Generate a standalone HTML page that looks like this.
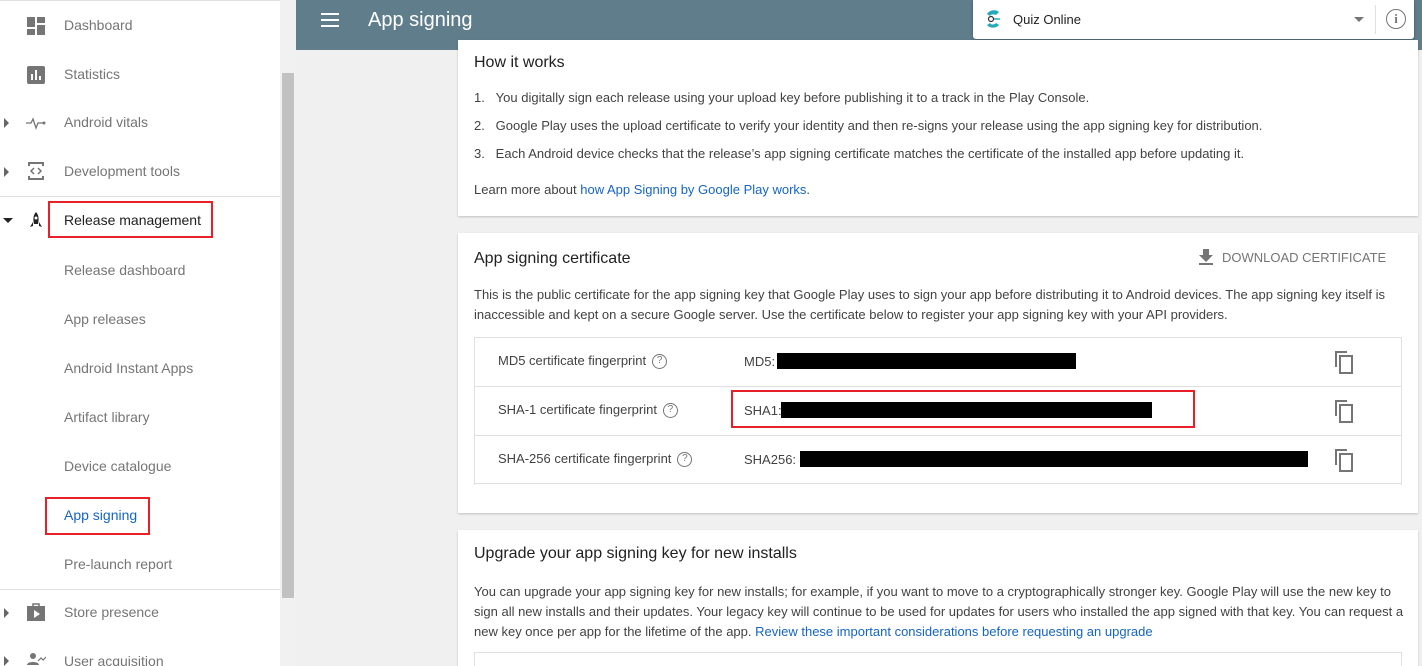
<!DOCTYPE html>
<html><head><meta charset="utf-8"><style>
*{box-sizing:border-box;margin:0;padding:0}
html,body{width:1422px;height:666px;overflow:hidden}
body{font-family:"Liberation Sans",Arial,sans-serif;background:#f0f0f0;position:relative;color:#212121}
.side{position:absolute;left:0;top:0;width:280px;height:666px;background:#fff;border-top:1px solid #e0e0e0}
.item{position:absolute;left:64px;font-size:14px;color:#757575;line-height:20px}
.ic{position:absolute;left:26px;width:20px;height:20px}
.arr{position:absolute;left:4px;width:0;height:0;border-top:5px solid transparent;border-bottom:5px solid transparent;border-left:5px solid #666}
.sep{position:absolute;left:0;width:280px;height:1px;background:#e0e0e0}
.redbox{position:absolute;border:2px solid #e8202a}
.sb{position:absolute;left:280px;top:0;width:16px;height:666px;background:#f1f1f1}
.thumb{position:absolute;left:282px;top:73px;width:12px;height:525px;background:#c1c1c1}
.hdr{position:absolute;left:296px;top:0;width:1126px;height:50px;background:#607d8b}
.card{position:absolute;left:458px;width:960px;background:#fff;box-shadow:0 1px 2px rgba(0,0,0,.2)}
.t{font-size:16px;color:#212121;position:absolute;left:16px}
.p{font-size:13px;color:#424242;position:absolute;left:16px;line-height:20px}
a{color:#1565c0;text-decoration:none}
.row{position:absolute;left:16px;width:928px;height:49px;border-top:1px solid #e0e0e0;font-size:13px;color:#424242}
.q{display:inline-block;width:15px;height:15px;border:1.5px solid #757575;border-radius:50%;font-size:10px;text-align:center;line-height:12px;color:#757575;margin-left:6px;vertical-align:middle}
.blk{position:absolute;height:16px;background:#000}
</style></head><body>
<div class="side">
<svg class="ic" style="top:15px" viewBox="0 0 20 20"><rect x="1" y="1" width="8" height="10" fill="#757575"/><rect x="11" y="1" width="8" height="6" fill="#757575"/><rect x="1" y="13" width="8" height="6" fill="#757575"/><rect x="11" y="9" width="8" height="10" fill="#757575"/></svg>
<div class="item" style="top:14px">Dashboard</div>
<svg class="ic" style="top:64px" viewBox="0 0 20 20"><rect x="1" y="1" width="18" height="18" rx="2" fill="#757575"/><rect x="5" y="9" width="2" height="6" fill="#fff"/><rect x="9" y="5" width="2" height="10" fill="#fff"/><rect x="13" y="11" width="2" height="4" fill="#fff"/></svg>
<div class="item" style="top:63px">Statistics</div>
<div class="arr" style="top:117px"></div>
<svg class="ic" style="top:112px" viewBox="0 0 20 20"><path d="M0 10h5l2-4 3 9 2-5h6" fill="none" stroke="#757575" stroke-width="1.3"/><circle cx="18" cy="10" r="1.5" fill="#757575"/></svg>
<div class="item" style="top:111px">Android vitals</div>
<div class="arr" style="top:166px"></div>
<svg class="ic" style="top:160px" viewBox="0 0 20 20"><path d="M3 5V2h14v3M3 15v3h14v-3" fill="none" stroke="#757575" stroke-width="2"/><path d="M8 7l-3 3 3 3M12 7l3 3-3 3" fill="none" stroke="#757575" stroke-width="1.5"/></svg>
<div class="item" style="top:160px">Development tools</div>
<div class="sep" style="top:195px"></div>
<div style="position:absolute;left:3px;top:217px;border-left:5px solid transparent;border-right:5px solid transparent;border-top:5px solid #222"></div>
<svg class="ic" style="top:210px" viewBox="0 0 20 20"><path d="M10 1c3 3 3 8 2 12H8C7 9 7 4 10 1z M7 11l-3 5 3-1z M13 11l3 5-3-1z" fill="#222"/><circle cx="10" cy="7" r="1.5" fill="#fff"/></svg>
<div class="item" style="top:209px;color:#212121">Release management</div>
<div class="redbox" style="left:48px;top:200px;width:165px;height:37px"></div>
<div class="item" style="top:259px">Release dashboard</div>
<div class="item" style="top:308px">App releases</div>
<div class="item" style="top:357px">Android Instant Apps</div>
<div class="item" style="top:406px">Artifact library</div>
<div class="item" style="top:455px">Device catalogue</div>
<div class="item" style="top:504px;color:#1565c0">App signing</div>
<div class="redbox" style="left:45px;top:496px;width:105px;height:38px"></div>
<div class="item" style="top:553px">Pre-launch report</div>
<div class="sep" style="top:588px"></div>
<div class="arr" style="top:607px"></div>
<svg class="ic" style="top:601px" viewBox="0 0 20 20"><path d="M7 4V2h6v2" fill="none" stroke="#757575" stroke-width="1.5"/><rect x="1" y="4" width="18" height="15" fill="#757575"/><path d="M8 8v8l6-4z" fill="#fff"/></svg>
<div class="item" style="top:601px">Store presence</div>
<div class="arr" style="top:655px"></div>
<svg class="ic" style="top:650px" viewBox="0 0 20 20"><circle cx="7" cy="5" r="3" fill="#757575"/><path d="M1 14c0-4 12-4 12 0z" fill="#757575"/><path d="M12 10l3-3 2 2 3-3" fill="none" stroke="#757575" stroke-width="1.2"/></svg>
<div class="item" style="top:650px">User acquisition</div>
</div>
<div class="sb"></div><div class="thumb"></div>
<div class="hdr">
<div style="position:absolute;left:25px;top:13px;width:18px;height:2px;background:#fff;box-shadow:0 6px 0 #fff,0 12px 0 #fff"></div>
<div style="position:absolute;left:72px;top:9px;font-size:20px;color:#fff">App signing</div>
</div>
<div style="position:absolute;left:973px;top:0;width:441px;height:39px;background:#fff;border-radius:0 0 3px 3px;box-shadow:0 1px 3px rgba(0,0,0,.3)">
<svg style="position:absolute;left:10px;top:8px" width="22" height="22" viewBox="0 0 22 22"><path d="M4 6c2-4 9-5 12-2l-3 3c-2-1-5-1-6 1z" fill="#26a9b8"/><path d="M4 17c3 4 10 3 12 0l-3-2c-2 2-5 2-6 0z" fill="#26a9b8"/><circle cx="8" cy="11" r="2.5" fill="none" stroke="#333" stroke-width="1.2"/><path d="M11 11h6" stroke="#26a9b8" stroke-width="1.5"/></svg>
<div style="position:absolute;left:40px;top:12px;font-size:13px;color:#212121">Quiz Online</div>
<div style="position:absolute;left:381px;top:17px;border-left:5px solid transparent;border-right:5px solid transparent;border-top:5px solid #757575"></div>
<div style="position:absolute;left:402px;top:5px;width:1px;height:29px;background:#e0e0e0"></div>
<div style="position:absolute;left:413px;top:9px;width:20px;height:20px;border:1.8px solid #757575;border-radius:50%;font-size:13px;font-weight:bold;text-align:center;line-height:17px;color:#757575;font-family:'Liberation Serif',serif">i</div>
</div>
<div class="card" style="top:40px;height:176px">
<div class="t" style="top:14px">How it works</div>
<div class="p" style="top:48px">1.&nbsp;&nbsp;&nbsp;You digitally sign each release using your upload key before publishing it to a track in the Play Console.</div>
<div class="p" style="top:76px">2.&nbsp;&nbsp;&nbsp;Google Play uses the upload certificate to verify your identity and then re-signs your release using the app signing key for distribution.</div>
<div class="p" style="top:104px">3.&nbsp;&nbsp;&nbsp;Each Android device checks that the release’s app signing certificate matches the certificate of the installed app before updating it.</div>
<div class="p" style="top:140px">Learn more about <a>how App Signing by Google Play works</a>.</div>
</div>
<div class="card" style="top:233px;height:280px">
<div class="t" style="top:17px">App signing certificate</div>
<svg style="position:absolute;left:741px;top:16px" width="14" height="16" viewBox="0 0 14 16"><path d="M4 0h6v6h4L7 13 0 6h4z M0 14h14v2H0z" fill="#757575"/></svg>
<div style="position:absolute;left:764px;top:17px;font-size:13px;color:#757575">DOWNLOAD CERTIFICATE</div>
<div class="p" style="top:52px;width:930px">This is the public certificate for the app signing key that Google Play uses to sign your app before distributing it to Android devices. The app signing key itself is inaccessible and kept on a secure Google server. Use the certificate below to register your app signing key with your API providers.</div>
<div class="row" style="top:104px"><span style="position:absolute;left:24px;top:15px">MD5 certificate fingerprint<span class="q">?</span></span><span style="position:absolute;left:270px;top:16px">MD5:</span><div class="blk" style="left:303px;top:15px;width:299px"></div></div>
<div class="row" style="top:153px"><span style="position:absolute;left:24px;top:15px">SHA-1 certificate fingerprint<span class="q">?</span></span><span style="position:absolute;left:270px;top:16px">SHA1:</span><div class="blk" style="left:307px;top:15px;width:371px"></div></div>
<div class="row" style="top:202px;border-bottom:1px solid #e0e0e0"><span style="position:absolute;left:24px;top:15px">SHA-256 certificate fingerprint<span class="q">?</span></span><span style="position:absolute;left:270px;top:16px">SHA256:</span><div class="blk" style="left:326px;top:15px;width:508px"></div></div>
</div>
<div style="position:absolute;left:474px;top:337px;width:928px;height:148px;border-left:1px solid #e0e0e0;border-right:1px solid #e0e0e0"></div>
<div class="redbox" style="left:731px;top:390px;width:464px;height:38px"></div>
<svg style="position:absolute;left:1333px;top:351px" width="22" height="24" viewBox="0 0 22 24"><path d="M14 1H3v15" fill="none" stroke="#757575" stroke-width="2"/><rect x="7" y="5" width="12" height="17" fill="none" stroke="#757575" stroke-width="2"/></svg>
<svg style="position:absolute;left:1333px;top:400px" width="22" height="24" viewBox="0 0 22 24"><path d="M14 1H3v15" fill="none" stroke="#757575" stroke-width="2"/><rect x="7" y="5" width="12" height="17" fill="none" stroke="#757575" stroke-width="2"/></svg>
<svg style="position:absolute;left:1333px;top:449px" width="22" height="24" viewBox="0 0 22 24"><path d="M14 1H3v15" fill="none" stroke="#757575" stroke-width="2"/><rect x="7" y="5" width="12" height="17" fill="none" stroke="#757575" stroke-width="2"/></svg>
<div class="card" style="top:530px;height:140px">
<div class="t" style="top:15px">Upgrade your app signing key for new installs</div>
<div class="p" style="top:52px;width:930px">You can upgrade your app signing key for new installs; for example, if you want to move to a cryptographically stronger key. Google Play will use the new key to sign all new installs and their updates. Your legacy key will continue to be used for updates for users who installed the app signed with that key. You can request a new key once per app for the lifetime of the app. <a>Review these important considerations before requesting an upgrade</a></div>
<div style="position:absolute;left:16px;top:122px;width:928px;height:20px;border:1px solid #e0e0e0"></div>
</div>
</body></html>
